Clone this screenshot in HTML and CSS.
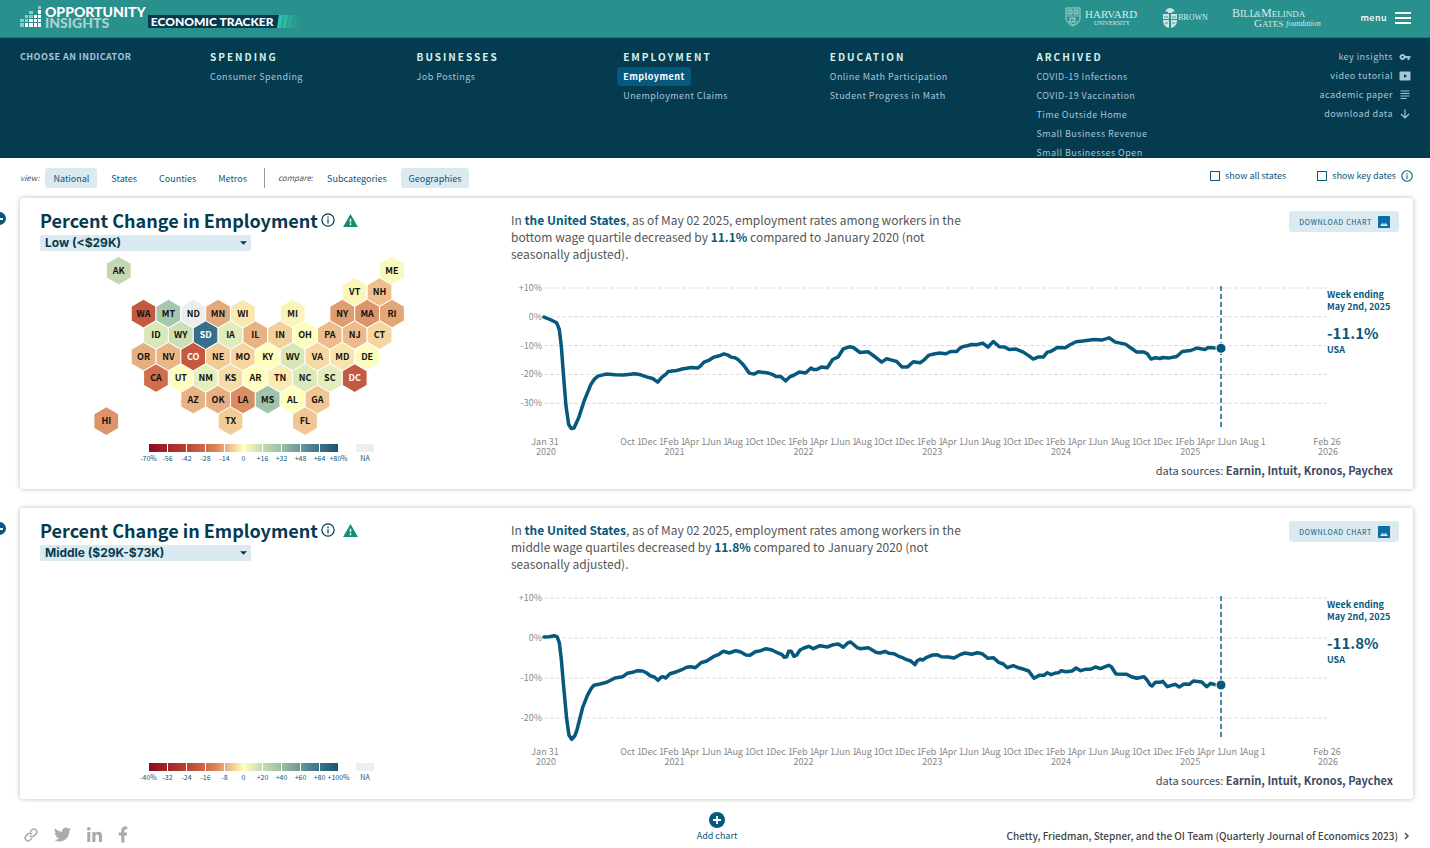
FILE: index.html
```html
<!DOCTYPE html>
<html lang="en">
<head>
    <meta charset="UTF-8">
    <meta name="viewport" content="width=device-width, initial-scale=1.0">
    <title>Opportunity Insights Economic Tracker</title>
    <link rel="stylesheet" href="styles.css">
</head>
<body>

    <header class="topbar">
        <a class="brand" href="#" aria-label="Opportunity Insights Economic Tracker">
            <svg class="brand-mark" viewBox="0 0 22 22">
                <g fill="#fff">
                    <rect x="18" y="4" width="3" height="4"/><rect x="18" y="9" width="3" height="3"/><rect x="18" y="13" width="3" height="3"/><rect x="18" y="17" width="3" height="4"/>
                    <rect x="14" y="13" width="3" height="3"/><rect x="14" y="17" width="3" height="4"/><rect x="9" y="17" width="4" height="4"/><rect x="5" y="17" width="3" height="4"/>
                    <rect x="14" y="9" width="3" height="3"/><rect x="9" y="13" width="4" height="3"/>
                </g>
                <g fill="#fff" opacity=".5">
                    <rect x="18" y="0" width="3" height="3"/><rect x="9" y="5" width="4" height="3"/><rect x="9" y="9" width="4" height="3"/>
                    <rect x="5" y="9" width="3" height="3"/><rect x="5" y="13" width="3" height="3"/><rect x="0" y="13" width="4" height="3"/><rect x="0" y="17" width="4" height="4"/>
                </g>
            </svg>
            <span class="brand-name">OPPORTUNITY<span class="brand-sub">INSIGHTS</span></span>
            <span class="brand-product">ECONOMIC TRACKER</span>
            <svg class="brand-stripes" viewBox="0 0 26 13">
                <path d="M0 0h3L1 13h-1z" fill="#043b4f"/>
                <g fill="#2bc4a9">
                    <path d="M3 0h4L5 13H1z"/>
                    <path d="M8 0h4l-2 13H6z" opacity=".8"/>
                    <path d="M13 0h4l-2 13h-4z" opacity=".5"/>
                    <path d="M18 0h3l-2 13h-3z" opacity=".3"/>
                    <path d="M22 0h3l-2 13h-3z" opacity=".12"/>
                </g>
            </svg>
        </a>

        <div class="partners">
            <svg class="logo-harvard" viewBox="0 0 76 22">
                <path d="M1 1h14v10c0 4-3 6-7 8-4-2-7-4-7-8z" fill="none" stroke="#c9e4e2" stroke-width=".8"/>
                <path d="M3 3h4v4H3zM9 3h4v4H9zM5 11h5v4H5z" fill="none" stroke="#c9e4e2" stroke-width=".8"/>
                <path d="M2 9h12M5 3v4M11 3v4M8 11v4M3 14l5 4 5-4" fill="none" stroke="#c9e4e2" stroke-width=".6"/>
                <text x="20" y="11" font-size="11">HARVARD</text>
                <text x="29" y="18" font-size="6">UNIVERSITY</text>
            </svg>
            <svg class="logo-brown" viewBox="0 0 46 22">
                <path d="M2 5c1-3 3-4 5-4s4 1 5 4l-2-1-1 2H5L4 4z" fill="#c9e4e2"/>
                <path d="M0 7h6v5H0zM8 7h6v5H8zM0 13h6v8c-4-1-6-4-6-8zM8 13h6c0 4-2 7-6 8z" fill="#c9e4e2"/>
                <path d="M1 10h4M9 10h4M2 16h3M9 16h3" stroke="#29918d" stroke-width=".8"/>
                <text x="15" y="13" font-size="8">BROWN</text>
            </svg>
            <svg class="logo-gates" viewBox="0 0 92 22">
                <text x="0" y="10" font-size="12">B<tspan font-size="10">ILL</tspan></text>
                <text x="22" y="10" font-size="9" font-style="italic">&amp;</text>
                <text x="29" y="10" font-size="12">M<tspan font-size="9">ELINDA</tspan></text>
                <text x="22" y="20" font-size="11">G<tspan font-size="9">ATES</tspan></text>
                <text x="54" y="19" font-size="8" font-style="italic">foundation</text>
            </svg>
            <button class="menu-button" type="button">menu
                <svg viewBox="0 0 16 12"><path d="M0 1h16M0 6h16M0 11h16" stroke="#fff" stroke-width="2"/></svg>
            </button>
        </div>
    </header>

    <nav class="indicators">
        <p class="indicators-label">CHOOSE AN INDICATOR</p>
        <section>
            <h2>SPENDING</h2>
            <a href="#">Consumer Spending</a>
        </section>
        <section>
            <h2>BUSINESSES</h2>
            <a href="#">Job Postings</a>
        </section>
        <section>
            <h2>EMPLOYMENT</h2>
            <a href="#" class="current">Employment</a>
            <a href="#">Unemployment Claims</a>
        </section>
        <section>
            <h2>EDUCATION</h2>
            <a href="#">Online Math Participation</a>
            <a href="#">Student Progress in Math</a>
        </section>
        <section>
            <h2>ARCHIVED</h2>
            <a href="#">COVID-19 Infections</a>
            <a href="#">COVID-19 Vaccination</a>
            <a href="#">Time Outside Home</a>
            <a href="#">Small Business Revenue</a>
            <a href="#">Small Businesses Open</a>
        </section>
        <div class="resources">
            <a href="#">key insights <svg viewBox="0 0 24 24"><path d="M12.65 10C11.83 7.67 9.61 6 7 6c-3.31 0-6 2.69-6 6s2.69 6 6 6c2.61 0 4.83-1.67 5.65-4H17v4h4v-4h2v-4H12.65zM7 14c-1.1 0-2-.9-2-2s.9-2 2-2 2 .9 2 2-.9 2-2 2z"/></svg></a>
            <a href="#">video tutorial <svg viewBox="0 0 24 24"><path fill-rule="evenodd" d="M10 8v8l6-4zM21 3H3a2 2 0 0 0-2 2v14a2 2 0 0 0 2 2h18a2 2 0 0 0 2-2V5a2 2 0 0 0-2-2z"/></svg></a>
            <a href="#">academic paper <svg viewBox="0 0 24 24"><path d="M15 18H3v2h12zM21 8H3v2h18zM3 15h18v-2H3zM3 3v2h18V3z"/></svg></a>
            <a href="#">download data <svg viewBox="0 0 24 24"><path d="M12 3v17M4 12l8 8 8-8" fill="none" stroke="#a8c4d8" stroke-width="2.4"/></svg></a>
        </div>
    </nav>

    <main>
        <div class="toolbar">
            <span class="toolbar-label">view:</span>
            <button type="button" class="tab active">National</button>
            <button type="button" class="tab">States</button>
            <button type="button" class="tab">Counties</button>
            <button type="button" class="tab">Metros</button>
            <span class="divider"></span>
            <span class="toolbar-label">compare:</span>
            <button type="button" class="tab">Subcategories</button>
            <button type="button" class="tab active">Geographies</button>
            <div class="toggles">
                <label><input type="checkbox" id="allStates"> show all states</label>
                <label><input type="checkbox" id="keyDates"> show key dates
                    <svg class="info" viewBox="0 0 16 16"><circle cx="8" cy="8" r="7"/><path d="M8 7v5M8 4v2"/></svg>
                </label>
            </div>
        </div>

        <article class="card">
            <button type="button" class="remove" aria-label="Remove chart"></button>
            <div class="card-map">
                <div class="card-title">
                    <h1>Percent Change in Employment</h1>
                    <svg class="info" viewBox="0 0 16 16"><circle cx="8" cy="8" r="7"/><path d="M8 7v5M8 4v2"/></svg>
                    <svg class="warn" viewBox="0 0 16 14"><path d="M8 0l8 14H0z" fill="#138d78"/><path d="M8 5v4M8 10v2" stroke="#fff" stroke-width="1.6"/></svg>
                </div>
                <select aria-label="Wage level">
                    <option>Low (&lt;$29K)</option>
                    <option>Middle ($29K-$73K)</option>
                </select>
                <svg class="hexmap" id="hexmap" viewBox="0 0 340 180"></svg>
                <div class="legend" data-ticks="-70%,-56,-42,-28,-14,0,+16,+32,+48,+64,+80%"></div>
            </div>
            <div class="card-chart">
                <div class="summary">
                    <p>In <strong>the United States</strong>, as of May 02 2025, employment rates among workers in the bottom wage quartile decreased by <strong>11.1%</strong> compared to January 2020 (not seasonally adjusted).</p>
                    <button type="button" class="download">DOWNLOAD CHART
                        <svg viewBox="0 0 18 18"><path fill-rule="evenodd" d="M1 0h16a1 1 0 0 1 1 1v16a1 1 0 0 1-1 1H1a1 1 0 0 1-1-1V1a1 1 0 0 1 1-1zM3 15h12l-4-5-2 3-2-3z"/></svg>
                    </button>
                </div>
                <div class="chart-row">
                    <svg class="chart" id="chartLow" viewBox="0 0 816 182"></svg>
                    <div class="reading">
                        <p class="reading-date">Week ending<br>May 2nd, 2025</p>
                        <p class="reading-value">-11.1%</p>
                        <p class="reading-place">USA</p>
                    </div>
                </div>
                <p class="sources">data sources: <strong>Earnin, Intuit, Kronos, Paychex</strong></p>
            </div>
        </article>

        <article class="card">
            <button type="button" class="remove" aria-label="Remove chart"></button>
            <div class="card-map">
                <div class="card-title">
                    <h1>Percent Change in Employment</h1>
                    <svg class="info" viewBox="0 0 16 16"><circle cx="8" cy="8" r="7"/><path d="M8 7v5M8 4v2"/></svg>
                    <svg class="warn" viewBox="0 0 16 14"><path d="M8 0l8 14H0z" fill="#138d78"/><path d="M8 5v4M8 10v2" stroke="#fff" stroke-width="1.6"/></svg>
                </div>
                <select aria-label="Wage level">
                    <option>Middle ($29K-$73K)</option>
                    <option>Low (&lt;$29K)</option>
                </select>
                <div class="hexmap-empty"></div>
                <div class="legend" data-ticks="-40%,-32,-24,-16,-8,0,+20,+40,+60,+80,+100%"></div>
            </div>
            <div class="card-chart">
                <div class="summary">
                    <p>In <strong>the United States</strong>, as of May 02 2025, employment rates among workers in the middle wage quartiles decreased by <strong>11.8%</strong> compared to January 2020 (not seasonally adjusted).</p>
                    <button type="button" class="download">DOWNLOAD CHART
                        <svg viewBox="0 0 18 18"><path fill-rule="evenodd" d="M1 0h16a1 1 0 0 1 1 1v16a1 1 0 0 1-1 1H1a1 1 0 0 1-1-1V1a1 1 0 0 1 1-1zM3 15h12l-4-5-2 3-2-3z"/></svg>
                    </button>
                </div>
                <div class="chart-row">
                    <svg class="chart" id="chartMiddle" viewBox="0 0 816 182"></svg>
                    <div class="reading">
                        <p class="reading-date">Week ending<br>May 2nd, 2025</p>
                        <p class="reading-value">-11.8%</p>
                        <p class="reading-place">USA</p>
                    </div>
                </div>
                <p class="sources">data sources: <strong>Earnin, Intuit, Kronos, Paychex</strong></p>
            </div>
        </article>
    </main>

    <footer>
        <div class="social">
            <a href="#" aria-label="Copy link"><svg width="14" height="14" viewBox="0 0 24 24"><path d="M10 13a5 5 0 0 0 7.54.54l3-3a5 5 0 0 0-7.07-7.07l-3 3M14 11a5 5 0 0 0-7.54-.54l-3 3a5 5 0 0 0 7.07 7.07l3-3" fill="none" stroke="#aaa" stroke-width="2.6"/></svg></a>
            <a href="#" aria-label="Twitter"><svg width="17" height="17" viewBox="0 0 24 24"><path d="M23.953 4.57a10 10 0 01-2.825.775 4.958 4.958 0 002.163-2.723c-.951.555-2.005.959-3.127 1.184a4.92 4.92 0 00-8.384 4.482C7.69 8.095 4.067 6.13 1.64 3.162a4.822 4.822 0 00-.666 2.475c0 1.71.87 3.213 2.188 4.096a4.904 4.904 0 01-2.228-.616v.06a4.923 4.923 0 003.946 4.827 4.996 4.996 0 01-2.212.085 4.936 4.936 0 004.604 3.417 9.867 9.867 0 01-6.102 2.105c-.39 0-.779-.023-1.17-.067a13.995 13.995 0 007.557 2.209c9.053 0 13.998-7.496 13.998-13.985 0-.21 0-.42-.015-.63A9.935 9.935 0 0024 4.59z"/></svg></a>
            <a href="#" aria-label="LinkedIn"><svg width="15" height="15" viewBox="0 0 448 448"><path d="M100.28 448H7.4V148.9h92.88zM53.79 108.1C24.09 108.1 0 83.5 0 53.8a53.79 53.79 0 0 1 107.58 0c0 29.7-24.1 54.3-53.79 54.3zM447.9 448h-92.68V302.4c0-34.7-.7-79.2-48.29-79.2-48.29 0-55.69 37.7-55.69 76.7V448h-92.78V148.9h89.08v40.8h1.3c12.4-23.5 42.69-48.3 87.88-48.3 94 0 111.28 61.9 111.28 142.3V448z"/></svg></a>
            <a href="#" aria-label="Facebook"><svg width="10" height="17" viewBox="0 0 320 512"><path d="M279.14 288l14.22-92.66h-88.91v-60.13c0-25.35 12.42-50.06 52.24-50.06h40.42V6.26S260.43 0 225.36 0c-73.22 0-121.08 44.38-121.08 124.72v70.62H22.89V288h81.39v224h100.17V288z"/></svg></a>
        </div>
        <button type="button" class="add-chart">
            <svg viewBox="0 0 16 16"><circle cx="8" cy="8" r="8" fill="#07587d"/><path d="M8 4v8M4 8h8" stroke="#fff" stroke-width="1.8"/></svg>
            Add chart
        </button>
        <a class="citation" href="#">Chetty, Friedman, Stepner, and the OI Team (Quarterly Journal of Economics 2023)
            <svg viewBox="0 0 6 8"><path d="M1 1l3 3-3 3" fill="none" stroke="#444" stroke-width="1.4"/></svg>
        </a>
    </footer>

    <script src="script.js"></script>
</body>
</html>
```
FILE: styles.css
```css
body {
    margin: 0;
    font-family: "Noto Sans CJK SC", "Noto Sans", sans-serif;
    font-size: 10px;
    line-height: 14px;
    color: #555;
    background: #fff;
}

h1, h2, p {
    margin: 0;
}

a {
    text-decoration: none;
    color: inherit;
}

button {
    font-family: inherit;
    border: none;
    padding: 0;
    background: none;
    cursor: pointer;
}

/* Top bar */
.topbar {
    display: flex;
    justify-content: space-between;
    align-items: center;
    box-sizing: border-box;
    height: 38px;
    padding: 0 19px 2px 20px;
    background: #29918d;
    border-bottom: 1px solid #1d777c;
}

.brand {
    display: flex;
    align-items: flex-end;
    margin-bottom: 2px;
    color: #fff;
    font-family: Lato, sans-serif;
    font-weight: 900;
}

.brand-mark {
    width: 22px;
    height: 22px;
}

.brand-name {
    margin-left: 3px;
    font-size: 14px;
    line-height: 11px;
}

.brand-sub {
    display: block;
    color: #a9d3d1;
}

.brand-product {
    margin-left: 2px;
    padding-left: 3px;
    padding-right: 2px;
    font-size: 12px;
    line-height: 13px;
    background: #043b4f;
}

.brand-stripes {
    width: 26px;
    height: 13px;
}

.partners {
    display: flex;
    align-items: center;
    color: #c9e4e2;
}

.partners text {
    font-family: "Liberation Serif", serif;
    fill: #d6ebe9;
}

.logo-harvard {
    width: 76px;
    height: 22px;
}

.logo-brown {
    width: 46px;
    height: 22px;
    margin-left: 22px;
}

.logo-gates {
    width: 92px;
    height: 22px;
    margin-left: 23px;
}

.menu-button {
    display: flex;
    align-items: center;
    gap: 8px;
    margin-left: 36px;
    font-size: 9px;
    font-weight: 500;
    letter-spacing: 0.05em;
    color: #fff;
}

.menu-button svg {
    width: 16px;
    height: 12px;
}

/* Indicator navigation */
.indicators {
    display: grid;
    grid-template-columns: 190px repeat(5, 1fr) 168px;
    box-sizing: border-box;
    height: 120px;
    padding: 9px 19px 0 20px;
    overflow: hidden;
    background: #043b4f;
    color: #a8c4d8;
    font-size: 9px;
    letter-spacing: 0.05em;
    line-height: 19px;
}

.indicators-label {
    font-weight: bold;
}

.indicators h2 {
    font-size: 10px;
    line-height: 20px;
    letter-spacing: 2px;
    color: #d8f0ea;
}

.indicators a {
    display: block;
}

.indicators .current {
    width: max-content;
    margin-left: -6px;
    padding: 0 6px;
    border-radius: 3px;
    background: #07587d;
    color: #fff;
    font-weight: bold;
}

.indicators .resources a {
    display: flex;
    justify-content: flex-end;
    align-items: center;
    gap: 6px;
}

.resources svg {
    width: 12px;
    height: 12px;
    fill: #a8c4d8;
}

/* Toolbar */
main {
    padding: 0 17px 0 20px;
}

.toolbar {
    display: flex;
    align-items: center;
    height: 40px;
}

.toolbar-label {
    font-size: 8px;
    font-style: italic;
    margin-right: 6px;
}

.tab {
    height: 20px;
    margin-right: 6px;
    padding: 0 8px;
    border-radius: 3px;
    font-size: 9px;
    color: #07587d;
}

.tab.active {
    background: #dbe9f0;
}

.divider {
    width: 1px;
    height: 20px;
    margin: 0 13px 0 3px;
    background: #999;
}

.toggles {
    display: flex;
    gap: 31px;
    margin-left: auto;
    padding-bottom: 4px;
}

.toggles label {
    display: flex;
    align-items: center;
    gap: 5px;
    font-size: 9px;
    color: #07587d;
}

.toggles input {
    appearance: none;
    width: 10px;
    height: 10px;
    margin: 0;
    border: 1px solid #07587d;
}

.info {
    width: 12px;
    height: 12px;
    fill: none;
    stroke: #07587d;
    stroke-width: 1.4;
}

/* Cards */
.card {
    position: relative;
    display: flex;
    margin-bottom: 19px;
    padding: 13px 14px 10px 20px;
    border-radius: 3px;
    box-shadow: 0 0 5px rgba(0, 0, 0, 0.28);
}

.remove {
    position: absolute;
    top: 14px;
    left: -27px;
    width: 13px;
    height: 13px;
    border-radius: 50%;
    background: linear-gradient(#fff, #fff) center / 7px 2px no-repeat #07587d;
}

.card-map {
    flex: 0 0 471px;
}

.card-title {
    display: flex;
    align-items: center;
    height: 18px;
}

.card-title h1 {
    font-size: 18px;
    color: #043b4f;
}

.card-title .info {
    width: 14px;
    height: 14px;
    margin-left: 3px;
    stroke: #043b4f;
}

.warn {
    width: 15px;
    height: 13px;
    margin-left: 8px;
}

.card select {
    appearance: none;
    display: block;
    width: 211px;
    height: 16px;
    margin: 6px 0 5px;
    padding: 0 5px;
    border: none;
    border-radius: 2px;
    font-family: Inter, sans-serif;
    font-size: 12px;
    font-weight: bold;
    line-height: 16px;
    color: #043b4f;
    background: url("data:image/svg+xml,%3Csvg xmlns='http://www.w3.org/2000/svg' viewBox='0 0 8 4'%3E%3Cpath d='M0 0h8L4 4z' fill='%23043b4f'/%3E%3C/svg%3E") right 4px center / 7px 4px no-repeat #dbe9f0;
}

.hexmap {
    display: block;
    width: 340px;
    margin-left: 50px;
}

.hexmap polygon {
    stroke: #fff;
    stroke-width: 1;
}

.hexmap text {
    font-size: 9px;
    font-weight: bold;
    text-anchor: middle;
}

.hexmap-empty {
    height: 189px;
}

.legend {
    display: grid;
    grid-template-columns: 209px 18px;
    column-gap: 8px;
    margin: 8px 0 0 99px;
    font-size: 7px;
    line-height: 12px;
    color: #07587d;
}

.ramp {
    height: 8px;
    margin: 0 9px 0 10px;
    background:
        repeating-linear-gradient(to right, transparent 0 18px, #fff 18px 19px),
        linear-gradient(to right, #8c0a25, #b8442f 20%, #d98559 35%, #f0c48f 43%, #ffffbf 50%, #d0dfb3 58%, #8fb8a3 72%, #4d8390 85%, #175374);
}

.na {
    height: 8px;
    background: #eee;
}

.ticks {
    display: grid;
    grid-template-columns: repeat(11, 19px);
}

.ticks span {
    display: flex;
    justify-content: center;
}

.na-label {
    text-align: center;
}

.card-chart {
    flex: 1;
    min-width: 0;
}

.summary {
    display: flex;
    justify-content: space-between;
    align-items: flex-start;
    height: 69px;
}

.summary p {
    max-width: 456px;
    font-size: 12px;
    line-height: 17px;
}

.summary strong {
    color: #07587d;
}

.download {
    display: flex;
    align-items: center;
    gap: 6px;
    height: 21px;
    padding: 0 9px 0 10px;
    border-radius: 3px;
    font-size: 7px;
    letter-spacing: 0.1em;
    color: #07587d;
    background: #dbe9f0;
}

.download svg {
    width: 12px;
    height: 12px;
    fill: #0a70a3;
}

.chart-row {
    display: flex;
    margin-right: 6px;
}

.chart {
    flex: 1;
    min-width: 0;
    overflow: visible;
}

.chart text {
    font-size: 9px;
    fill: #888;
    text-anchor: middle;
}

.chart .y-label {
    text-anchor: end;
}

.grid-line {
    stroke: #ddd;
    stroke-dasharray: 4 2;
}

.series {
    fill: none;
    stroke: #07587d;
    stroke-linejoin: round;
    stroke-linecap: round;
}

.marker-line {
    stroke: #07587d;
    stroke-dasharray: 5 3;
}

.marker {
    fill: #07587d;
}

.reading {
    flex: 0 0 66px;
    padding-top: 9px;
    color: #07587d;
    font-weight: bold;
    white-space: nowrap;
}

.reading-date {
    font-size: 9px;
    line-height: 12px;
}

.reading-value {
    margin-top: 10px;
    font-size: 15px;
    line-height: 20px;
}

.reading-place {
    margin-top: 1px;
    font-size: 9px;
    line-height: 12px;
}

.sources {
    margin-right: 6px;
    font-size: 11px;
    line-height: 17px;
    text-align: right;
    color: #3d4a63;
}

/* Footer */
footer {
    display: grid;
    grid-template-columns: 1fr auto 1fr;
    align-items: end;
    padding: 0 20px 5px 24px;
    margin-top: -6px;
}

.social {
    display: flex;
    align-items: center;
    gap: 16px;
}

.social a {
    display: flex;
}

.social svg {
    fill: #aaa;
}

.add-chart {
    display: flex;
    flex-direction: column;
    align-items: center;
    gap: 1px;
    font-size: 9px;
    line-height: 14px;
    color: #07587d;
}

.add-chart svg {
    width: 16px;
    height: 16px;
}

.citation {
    display: flex;
    justify-content: flex-end;
    align-items: center;
    gap: 6px;
    font-size: 10px;
    font-weight: 500;
    white-space: nowrap;
    color: #444;
}

.citation svg {
    width: 6px;
    height: 8px;
}
```
FILE: script.js
```js
const SVG = 'http://www.w3.org/2000/svg';

function add(parent, tag, attrs, text) {
    const el = document.createElementNS(SVG, tag);
    for (const key in attrs) el.setAttribute(key, attrs[key]);
    if (text) el.textContent = text;
    parent.appendChild(el);
    return el;
}

// state, half-column, row, fill
const states = [
    ['AK', 1, 0, '#c3d8b0'], ['ME', 23, 0, '#f6fabf'],
    ['VT', 20, 1, '#fbf5b9'], ['NH', 22, 1, '#efc08e'],
    ['WA', 3, 2, '#c6583f'], ['MT', 5, 2, '#a5c8ad'], ['ND', 7, 2, '#eeeeee'], ['MN', 9, 2, '#e4a97b'], ['WI', 11, 2, '#f9e9b0'],
    ['MI', 15, 2, '#fbf3b7'], ['NY', 19, 2, '#e09d70'], ['MA', 21, 2, '#dc9468'], ['RI', 23, 2, '#e3a677'],
    ['ID', 4, 3, '#dae7b8'], ['WY', 6, 3, '#cddfb5'], ['SD', 8, 3, '#37708a'], ['IA', 10, 3, '#e0ecbb'], ['IL', 12, 3, '#e8b283'],
    ['IN', 14, 3, '#f3cf9a'], ['OH', 16, 3, '#fdfdbe'], ['PA', 18, 3, '#eebd8b'], ['NJ', 20, 3, '#edba89'], ['CT', 22, 3, '#f5d6a0'],
    ['OR', 3, 4, '#e7ae80'], ['NV', 5, 4, '#ebb686'], ['CO', 7, 4, '#c6583f'], ['NE', 9, 4, '#f2cc97'], ['MO', 11, 4, '#f5d5a0'],
    ['KY', 13, 4, '#fefebe'], ['WV', 15, 4, '#d9e7b8'], ['VA', 17, 4, '#f5d8a2'], ['MD', 19, 4, '#f8e5ac'], ['DE', 21, 4, '#fbfdbf'],
    ['CA', 4, 5, '#cf6d4d'], ['UT', 6, 5, '#fdfdbe'], ['NM', 8, 5, '#e5efbb'], ['KS', 10, 5, '#f6dca6'], ['AR', 12, 5, '#fefebe'],
    ['TN', 14, 5, '#f9ecb2'], ['NC', 16, 5, '#dbe8b8'], ['SC', 18, 5, '#e3edbb'], ['DC', 20, 5, '#c25a44'],
    ['AZ', 7, 6, '#e9b283'], ['OK', 9, 6, '#e8b081'], ['LA', 11, 6, '#da8d63'], ['MS', 13, 6, '#a1c3ab'], ['AL', 15, 6, '#fdfec0'], ['GA', 17, 6, '#f0c592'],
    ['HI', 0, 7, '#de9468'], ['TX', 10, 7, '#f2cb97'], ['FL', 16, 7, '#f0c794']
];

function drawHexmap(svg) {
    const r = 14.3;
    const halfW = r * Math.sqrt(3) / 2;
    states.forEach(([name, col, row, fill]) => {
        const cx = 16.3 + col * 12.42;
        const cy = 14.6 + row * 21.5;
        const pts = [[0, -r], [halfW, -r / 2], [halfW, r / 2], [0, r], [-halfW, r / 2], [-halfW, -r / 2]];
        add(svg, 'polygon', { points: pts.map(p => (cx + p[0]) + ',' + (cy + p[1])).join(' '), fill: fill });
        const light = ['SD', 'CO', 'DC'].includes(name);
        add(svg, 'text', { x: cx, y: cy + 3, fill: light ? '#fff' : '#111' }, name);
    });
}

function drawLegend(el) {
    const ticks = el.dataset.ticks.split(',').map(t => '<span>' + t + '</span>').join('');
    el.innerHTML = '<div class="ramp"></div><div class="na"></div><div class="ticks">' + ticks + '</div><div class="na-label">NA</div>';
}

// x,y pairs from the start of the zero line, three units to a pixel
const low = '0,1 18,8 38,18 46,38 52,88 58,168 66,268 74,323 82,335 90,334 104,303 121,251 140,204 152,186 162,178 186,172 213,174 238,175 273,171 290,174 310,181 326,185 341,196 354,181 366,172 373,164 398,161 418,156 443,152 461,154 469,148 480,136 496,130 510,121 526,117 540,111 550,114 561,121 573,123 584,130 598,144 616,169 630,172 643,165 668,168 683,172 696,179 710,179 725,192 739,179 748,176 766,166 785,169 801,154 808,158 818,158 832,151 850,153 866,128 883,120 898,96 916,90 928,92 948,107 972,105 988,116 1013,136 1028,126 1043,130 1058,134 1074,151 1090,151 1108,135 1128,138 1140,130 1155,115 1173,111 1185,109 1206,111 1220,104 1238,104 1248,94 1258,89 1270,87 1283,83 1298,84 1316,79 1332,91 1348,74 1366,90 1382,91 1396,98 1416,97 1438,106 1456,118 1468,127 1482,121 1498,121 1510,106 1520,104 1540,92 1564,93 1578,84 1596,75 1616,73 1650,68 1673,70 1695,63 1714,76 1744,82 1763,95 1778,106 1800,106 1810,111 1821,127 1834,123 1848,125 1856,122 1873,124 1898,119 1915,104 1940,101 1958,94 1983,98 1993,92 2013,94';
const middle = '0,-3 16,-4 30,-7 39,-4 46,14 52,64 58,134 68,244 75,292 83,304 92,294 98,279 116,208 130,173 143,149 150,142 168,138 188,133 213,120 236,116 250,106 266,103 280,98 296,99 308,105 320,114 331,117 342,127 352,117 358,116 365,120 378,107 398,101 416,94 428,88 440,86 454,89 471,74 488,69 508,56 523,50 538,40 556,45 575,38 590,42 606,51 618,52 634,41 650,38 666,32 684,36 700,44 714,50 721,58 728,56 734,40 742,40 750,55 758,51 768,36 780,30 794,25 808,32 828,23 850,27 868,20 883,18 898,28 912,14 920,12 940,29 948,32 973,29 996,43 1008,45 1023,40 1036,46 1050,47 1064,55 1076,59 1088,65 1100,69 1113,80 1120,68 1128,64 1136,66 1148,58 1166,51 1180,50 1192,56 1213,57 1230,60 1248,50 1263,45 1283,49 1300,44 1314,47 1332,61 1348,59 1364,73 1378,78 1390,89 1408,83 1423,89 1440,94 1454,99 1470,121 1486,112 1500,112 1510,104 1522,110 1534,105 1544,104 1552,98 1566,101 1584,99 1596,90 1610,98 1624,94 1640,94 1654,87 1670,92 1684,86 1694,82 1702,86 1716,108 1748,109 1762,116 1778,121 1800,116 1810,127 1818,140 1824,144 1834,133 1848,133 1856,130 1870,146 1893,139 1906,147 1920,138 1936,139 1948,129 1973,132 1988,146 2000,136 2013,140';

const LEFT = 33;
const RIGHT = 816;
const START = Date.UTC(2020, 0, 31);
const END = Date.UTC(2026, 1, 26);
const MONTHS = ['Jan', 'Feb', 'Mar', 'Apr', 'May', 'Jun', 'Jul', 'Aug', 'Sep', 'Oct', 'Nov', 'Dec'];

function xAt(date) {
    return LEFT + (date - START) / (END - START) * (RIGHT - LEFT);
}

function drawChart(svg, data, step, labels, lastY) {
    const top = 8;
    const zero = top + step;

    labels.forEach((label, i) => {
        const y = top + i * step;
        add(svg, 'line', { class: 'grid-line', x1: LEFT, x2: RIGHT, y1: y, y2: y });
        add(svg, 'text', { class: 'y-label', x: LEFT - 2, y: y + 3 }, label);
    });

    add(svg, 'text', { x: LEFT + 1, y: 165 }, 'Jan 31');
    add(svg, 'text', { x: LEFT + 2, y: 175 }, '2020');
    // every second month, October 2020 to August 2025
    for (let m = 9; m <= 67; m += 2) {
        const date = Date.UTC(2020, m, 1);
        add(svg, 'text', { x: xAt(date) + 1, y: 165 }, MONTHS[m % 12] + ' 1');
        if (m % 12 === 1) add(svg, 'text', { x: xAt(date) + 1, y: 175 }, String(2020 + Math.floor(m / 12)));
    }
    add(svg, 'text', { x: RIGHT, y: 165 }, 'Feb 26');
    add(svg, 'text', { x: RIGHT + 1, y: 175 }, '2026');

    const mx = LEFT + 677;
    add(svg, 'line', { class: 'marker-line', x1: mx, x2: mx, y1: 6, y2: 150, 'stroke-width': 1.4 });

    const points = data.split(' ').map(p => {
        const [x, y] = p.split(',').map(Number);
        return (LEFT + x / 3).toFixed(1) + ',' + (zero + y / 3).toFixed(1);
    });
    add(svg, 'polyline', { class: 'series', points: points.join(' '), 'stroke-width': 3.5 });
    add(svg, 'circle', { class: 'marker', cx: mx, cy: zero + lastY, r: 5, stroke: '#fff', 'stroke-width': 1 });
}

drawHexmap(document.getElementById('hexmap'));
document.querySelectorAll('.legend').forEach(drawLegend);
drawChart(document.getElementById('chartLow'), low, 28.8, ['+10%', '0%', '-10%', '-20%', '-30%'], 31.5);
drawChart(document.getElementById('chartMiddle'), middle, 40, ['+10%', '0%', '-10%', '-20%'], 47);
```
